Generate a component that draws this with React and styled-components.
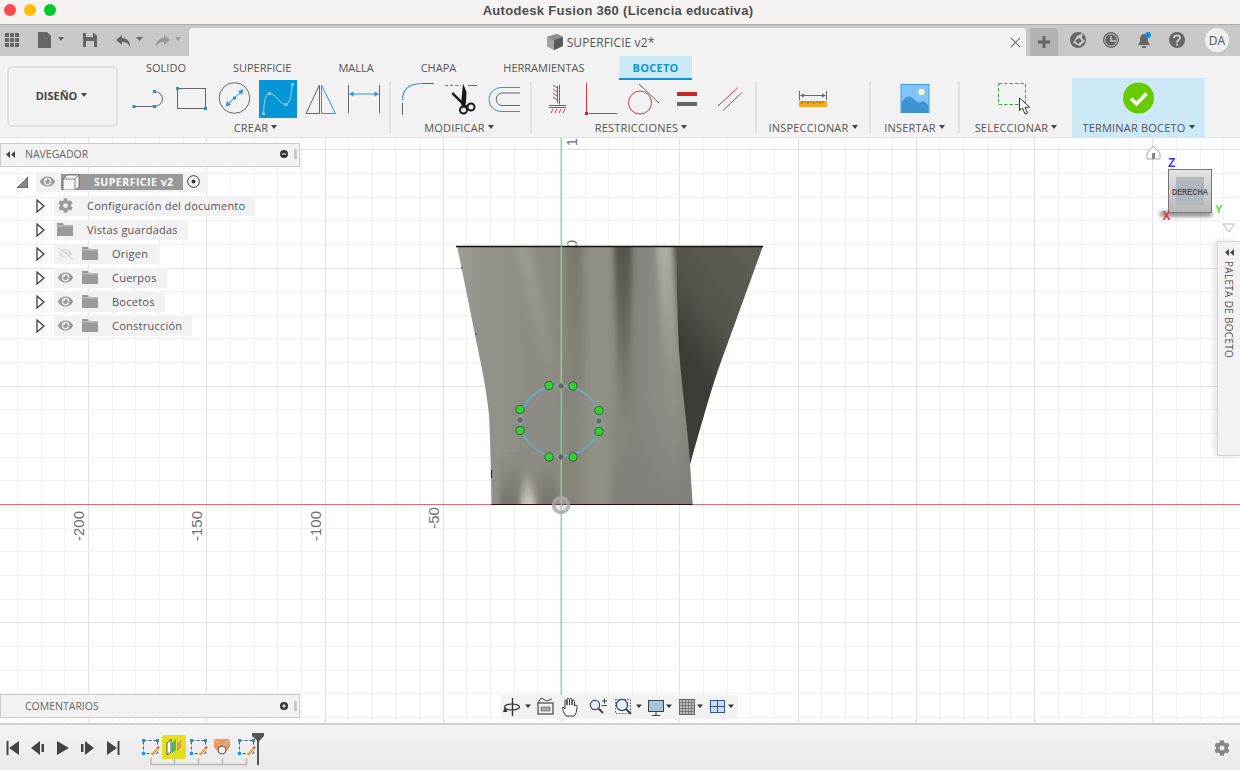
import styled, { createGlobalStyle } from "styled-components"
import { FaCog, FaEye, FaEyeSlash } from "react-icons/fa"

const GlobalStyle = createGlobalStyle`
    html, body {
        margin: 0;
        padding: 0;
        background: #fff;
    }
    * {
        box-sizing: border-box;
    }
`

// Shell
const Window = styled.div`
    width: 1240px;
    height: 770px;
    display: flex;
    flex-direction: column;
    overflow: hidden;
    font-family: "Open Sans", "Liberation Sans", sans-serif;
    color: #555;
`

const TitleBar = styled.div`
    height: 25px;
    flex: none;
    position: relative;
    display: flex;
    align-items: center;
    justify-content: center;
    background: #f6f3f2;
    border-bottom: 1px solid #adadad;
`

const TrafficLights = styled.div`
    position: absolute;
    left: 4px;
    top: 4px;
    display: flex;
    gap: 8px;
`

const Light = styled.span`
    width: 12px;
    height: 12px;
    border-radius: 50%;
    background: ${({ $color }) => $color};
`

const Title = styled.div`
    font-family: "Liberation Sans", sans-serif;
    font-size: 13px;
    font-weight: 700;
    letter-spacing: 0.3px;
    color: #4d4d4d;
    margin: -3px 4px 0 0;
`

const TabStrip = styled.div`
    height: 31px;
    flex: none;
    display: flex;
    align-items: flex-end;
    background: #c8c8c8;
`

const QuickTools = styled.div`
    width: 189px;
    height: 31px;
    flex: none;
`

const DocTab = styled.div`
    width: 837px;
    height: 28px;
    flex: none;
    position: relative;
    display: flex;
    align-items: center;
    justify-content: center;
    gap: 4px;
    padding-right: 14px;
    background: #f2f2f2;
    border-radius: 4px 4px 0 0;
    font-size: 12px;
    letter-spacing: 0.1px;
    color: #555;
`

const CloseTab = styled.span`
    position: absolute;
    right: 4px;
    top: 7px;
    display: flex;
`

const PlusTab = styled.div`
    width: 28px;
    height: 28px;
    flex: none;
    margin-left: 4px;
    display: flex;
    align-items: center;
    justify-content: center;
    background: #b3b3b3;
    border-radius: 3px 3px 0 0;
`

const StatusIcons = styled.div`
    flex: 1;
    height: 31px;
`

const Avatar = styled.div`
    position: absolute;
    right: 11px;
    top: 28px;
    width: 24px;
    height: 24px;
    border-radius: 50%;
    background: #efefef;
    display: flex;
    align-items: center;
    justify-content: center;
    font-size: 12px;
    color: #555;
`

// Ribbon
const Ribbon = styled.div`
    height: 82px;
    flex: none;
    display: flex;
    background: #f2f2f2;
    border-bottom: 1px solid #e2e2e2;
`

const DesignColumn = styled.div`
    width: 130px;
    flex: none;
    padding: 10px 12px 10px 7px;
`

const DesignButton = styled.div`
    height: 61px;
    display: flex;
    align-items: center;
    justify-content: center;
    gap: 4px;
    padding: 0 2px 2px 0;
    border: 2px solid #e0e0e0;
    border-radius: 5px;
    font-size: 11px;
    font-weight: 700;
    color: #444;
`

const RibbonBody = styled.div`
    flex: 1;
    display: flex;
    flex-direction: column;
`

const TabsRow = styled.div`
    height: 22px;
    flex: none;
    display: flex;
    gap: 21px;
    padding-left: 3px;
`

const RibbonTab = styled.div`
    height: 24px;
    padding: 0 13px;
    margin-left: ${({ $active }) => ($active ? 1 : 0)}px;
    display: flex;
    align-items: center;
    font-size: 11px;
    font-weight: ${({ $active }) => ($active ? 700 : 400)};
    letter-spacing: ${({ $active }) => ($active ? 0.3 : 0)}px;
    color: ${({ $active }) => ($active ? "#0696d7" : "#555")};
    background: ${({ $active }) => ($active ? "#cde9f5" : "transparent")};
    border-bottom: 2px solid ${({ $active }) => ($active ? "#0696d7" : "transparent")};
`

const GroupsRow = styled.div`
    height: 59px;
    flex: none;
    display: flex;
`

const Group = styled.div`
    width: ${({ $width }) => $width}px;
    flex: none;
    display: flex;
    flex-direction: column;
    align-items: ${({ $center }) => ($center ? "center" : "stretch")};
    padding: 2px ${({ $right }) => $right || 0}px 0 ${({ $left }) => $left || 0}px;
    background: ${({ $finish }) => ($finish ? "#cde9f5" : "transparent")};
`

const IconRow = styled.div`
    height: 38px;
    flex: none;
    display: flex;
    gap: 5px;
`

const IconSlot = styled.div`
    width: 38px;
    height: 38px;
    flex: none;
    background: ${({ $active }) => ($active ? "#0696d7" : "transparent")};
    svg {
        display: block;
        overflow: visible;
    }
`

const GroupLabel = styled.div`
    height: 20px;
    display: flex;
    align-items: center;
    justify-content: center;
    gap: 3px;
    font-size: 11px;
    letter-spacing: 0.2px;
    white-space: nowrap;
    color: #555;
`

const Caret = styled.span`
    width: 0;
    height: 0;
    border-left: 3px solid transparent;
    border-right: 3px solid transparent;
    border-top: 4px solid #444;
    margin-top: -1px;
`

const Separator = styled.div`
    width: 2px;
    flex: none;
    margin: 4px 0;
    background: #e0e0e0;
`

// Viewport
const Canvas = styled.div`
    flex: 1;
    position: relative;
    overflow: hidden;
    background: #fff;
`

const Scene = styled.svg`
    position: absolute;
    inset: 0;
    display: block;
`

const AxisLabel = styled.span`
    position: absolute;
    left: ${({ $x }) => $x}px;
    top: ${({ $y }) => $y}px;
    transform: translate(-50%, -50%) rotate(-90deg);
    font-family: "Liberation Sans", sans-serif;
    font-size: 15px;
    color: #6e6e6e;
`

const SidePanel = styled.div`
    position: absolute;
    left: 0;
    top: ${({ $top }) => $top}px;
    width: 300px;
`

const PanelHeader = styled.div`
    height: 24px;
    display: flex;
    align-items: center;
    padding: 0 2px ${({ $low }) => ($low ? 0 : 2)}px 5px;
    background: #f2f2f2;
    border: 1px solid #ccc;
    font-size: 10.5px;
    color: #666;
`

const HeaderLabel = styled.span`
    flex: 1;
    margin-left: ${({ $left }) => $left}px;
`

const Tree = styled.div`
    margin-top: 3px;
`

const TreeRow = styled.div`
    height: 24px;
    display: flex;
    align-items: center;
    padding-left: ${({ $root }) => ($root ? 17 : 36)}px;
`

const RowPill = styled.div`
    height: 20px;
    margin-left: ${({ $root }) => ($root ? 8 : 9)}px;
    display: flex;
    align-items: center;
    padding: 0 ${({ $root }) => ($root ? 8 : 10)}px 1px 3px;
    background: #f2f2f2;
    font-size: 11px;
    letter-spacing: 0.24px;
    color: #555;
`

const RowIcon = styled.span`
    width: 16px;
    height: 16px;
    flex: none;
    margin-right: ${({ $gap }) => $gap}px;
    display: flex;
    align-items: center;
    justify-content: center;
    color: ${({ $faint }) => ($faint ? "#dcdcdc" : "#9a9a9a")};
`

const RootBadge = styled.div`
    width: 122px;
    height: 16px;
    flex: none;
    margin: 1px 4px 0 6px;
    display: flex;
    align-items: center;
    padding-bottom: 1px;
    background: #999;
    color: #fff;
    font-size: 10.5px;
    font-weight: 700;
    letter-spacing: 0.5px;
`

const RootName = styled.span`
    margin-left: 14px;
`

const ViewCube = styled.svg`
    position: absolute;
    right: 0;
    top: 0;
    display: block;
`

const Palette = styled.div`
    position: absolute;
    right: 0;
    top: 103px;
    width: 23px;
    height: 215px;
    padding-top: 7px;
    display: flex;
    flex-direction: column;
    align-items: center;
    gap: 5px;
    background: #f2f2f2;
    border: 1px solid #d5d5d5;
    border-right: none;
    box-shadow: -3px 0 6px rgba(0, 0, 0, 0.1);
    font-size: 10px;
    letter-spacing: 0.3px;
    color: #555;
`

const PaletteLabel = styled.span`
    writing-mode: vertical-rl;
    white-space: nowrap;
`

const NavBar = styled.div`
    position: absolute;
    left: 501px;
    bottom: 4px;
    width: 237px;
    height: 24px;
    background: #f2f2f2;
`

// Timeline
const Timeline = styled.div`
    height: 47px;
    flex: none;
    position: relative;
    display: flex;
    align-items: center;
    justify-content: space-between;
    padding: 0 10px 0 0;
    background: linear-gradient(#f4f4f4, #e8e8e8);
    border-top: 2px solid #cfcfcf;
`

const SettingsGear = styled.span`
    display: flex;
    color: #888;
`

// Drawings, in page coordinates
function Glyph({ x, y = 80, size = 38, children }) {
    return (
        <svg width={size} height={size} viewBox={`${x} ${y} ${size} ${size}`}>
            {children}
        </svg>
    )
}

function Handle({ x, y, fill = "#1e90e0", size = 3 }) {
    return <rect x={x - size / 2} y={y - size / 2} width={size} height={size} fill={fill} />
}

const INK = "#666"
const BLUE = "#2b96e0"
const RED = "#d03a3a"

const createIcons = [
    {
        x: 130,
        art: (
            <>
                <path d="M134 106.5H154.5M154.5 91.5A8 7.5 0 0 1 154.5 106.5" fill="none" stroke={INK} />
                <Handle x={134} y={106.5} />
                <Handle x={154.5} y={91.5} />
                <Handle x={154.5} y={106.5} />
            </>
        ),
    },
    {
        x: 173,
        art: (
            <>
                <rect x="177.5" y="88.5" width="28" height="20" fill="none" stroke={INK} />
                <Handle x={177.5} y={88.5} />
                <Handle x={205.5} y={108.5} />
            </>
        ),
    },
    {
        x: 216,
        art: (
            <>
                <circle cx="234.5" cy="98" r="15.3" fill="none" stroke={INK} />
                <path d="M226 106L243 90" stroke={BLUE} />
                <path d="M243.5 89.5L238 91L242 95ZM225.5 106.5L231 105L227 101Z" fill={BLUE} />
                <Handle x={234.5} y={98} />
            </>
        ),
    },
    {
        x: 259,
        active: true,
        art: (
            <>
                <path d="M263.5 113.5C264 100 266 93 270 93.5C276 94 280 105 286 104.5C290 104 291 95 292.5 84.5" fill="none" stroke="#9fd6f2" />
                <Handle x={263.5} y={113.5} fill="#7cc6ee" />
                <Handle x={269.5} y={93.5} fill="#7cc6ee" />
                <Handle x={286} y={104.5} fill="#7cc6ee" />
                <Handle x={292.5} y={84.5} fill="#7cc6ee" />
            </>
        ),
    },
    {
        x: 302,
        art: (
            <>
                <path d="M306 113.5L319.5 85V113.5Z" fill="none" stroke={INK} />
                <path d="M321.5 113.5V85L335.5 113.5Z" fill="none" stroke={BLUE} />
            </>
        ),
    },
    {
        x: 345,
        art: (
            <>
                <path d="M348.5 85V113M379.5 85V113" stroke={INK} />
                <path d="M350 94H378" stroke={BLUE} />
                <path d="M349 94L353.5 91.5V96.5ZM379 94L374.5 91.5V96.5Z" fill={BLUE} />
            </>
        ),
    },
]

const modifyIcons = [
    {
        x: 399,
        art: (
            <>
                <path d="M402.5 100C402.5 90 409 84 421 83.5" fill="none" stroke={BLUE} strokeWidth="1.2" />
                <path d="M422 83.5H434M402.5 103V115" stroke={INK} />
            </>
        ),
    },
    {
        x: 442,
        art: (
            <>
                <path d="M445 85.5H461" stroke={BLUE} strokeDasharray="3 2" />
                <path d="M468 85.5H477" stroke={INK} />
                <path d="M453 92L465 104L468 106.5L465.5 108L451.5 94Z" fill="#1a1a1a" />
                <path d="M463 83.5L466.5 92L466 103L463 108L461 104Z" fill="#1a1a1a" />
                <circle cx="463.5" cy="110" r="3.5" fill="none" stroke="#1a1a1a" strokeWidth="2" />
                <circle cx="471" cy="107" r="3.5" fill="none" stroke="#1a1a1a" strokeWidth="2" />
            </>
        ),
    },
    {
        x: 485,
        art: (
            <>
                <path d="M520 87.5H501A12 12 0 0 0 501 111.5H520" fill="none" stroke={BLUE} />
                <path d="M520 93H501A6.5 6.5 0 0 0 501 105.5H520" fill="none" stroke={INK} />
            </>
        ),
    },
]

const constraintIcons = [
    {
        x: 538,
        art: (
            <>
                <path d="M559.5 85V104.5M549 105.5H566M549 107.5H566" stroke={INK} />
                <path d="M557.5 86V103M557 88L553 85M557 92L553 89M557 96L553 93M557 100L553 97M551 113L553 109M555 113L557 109M559 113L561 109M563 113L565 109" stroke={RED} fill="none" />
            </>
        ),
    },
    {
        x: 581,
        art: (
            <>
                <path d="M586.5 83V112" stroke={RED} />
                <rect x="585" y="112" width="3" height="3" fill="#c22" />
                <path d="M589 113.5H617" stroke={INK} />
            </>
        ),
    },
    {
        x: 624,
        art: (
            <>
                <circle cx="640" cy="102.5" r="11.5" fill="none" stroke={RED} />
                <path d="M639 84L659 103" stroke={INK} />
            </>
        ),
    },
    {
        x: 667,
        art: (
            <>
                <rect x="677" y="92" width="20" height="4" fill="#c62828" />
                <rect x="677" y="102" width="20" height="4" fill="#666" />
            </>
        ),
    },
    {
        x: 710,
        art: <path d="M718 106L738 87.5" stroke={RED} />,
        extra: <path d="M723 110.5L742 92.5" stroke={INK} />,
    },
]

function Ruler() {
    return (
        <Glyph x={795}>
            <path d="M800.5 91V100M827.5 91V100" stroke={INK} />
            <path d="M802 95.5H826" stroke={INK} />
            <path d="M801 95.5L805 93.5V97.5ZM827 95.5L823 93.5V97.5Z" fill={INK} />
            <rect x="800" y="101" width="28" height="6" fill="#f5a81c" />
            <path d="M803 101v3M806 101v2M809 101v3M812 101v2M815 101v3M818 101v2M821 101v3M824 101v2" stroke="#8a6414" />
        </Glyph>
    )
}

function PictureIcon() {
    return (
        <Glyph x={895.5}>
            <rect x="900.5" y="84.5" width="28" height="28" fill="#7fc4fb" stroke="#4a9ad8" />
            <path d="M901 113V103C905 95 910 95 914 100C917 103 920 103 923 101C925 102 927 104 928 106V113Z" fill="#3f93d0" />
            <circle cx="921" cy="92" r="3.2" fill="#fff4c4" />
        </Glyph>
    )
}

function SelectIcon() {
    return (
        <Glyph x={997}>
            <rect x="998.5" y="83.5" width="27" height="21" fill="none" stroke="#2ab34a" strokeDasharray="3.5 2" />
            <path d="M1019.5 98V110.5L1022.5 108L1025 114L1027.5 113L1025 107.5L1029.5 107Z" fill="#fff" stroke="#333" />
        </Glyph>
    )
}

function FinishIcon() {
    return (
        <Glyph x={1119.5}>
            <circle cx="1138" cy="98" r="15.5" fill="#66cc00" />
            <path d="M1130.5 98.5L1136 104L1146 93.5" fill="none" stroke="#fff" strokeWidth="3.6" />
        </Glyph>
    )
}

function CubeIcon() {
    return (
        <svg width="16" height="16" viewBox="0 0 16 16">
            <path d="M0 3L10 0L16 3V12L7 16L0 12Z" fill="#777" />
            <path d="M0 3L7 6V16L0 12Z" fill="#a3a3a3" />
            <path d="M7 6L16 3V12L7 16Z" fill="#5b5b5b" />
            <path d="M0 3L10 0L16 3L7 6Z" fill="#8d8d8d" />
        </svg>
    )
}

function StripArt() {
    return (
        <svg width="189" height="31" viewBox="0 25 189 31">
            {[33, 38, 43].map((y) =>
                [5, 10, 15].map((x) => <rect key={`${x}-${y}`} x={x} y={y} width="4" height="4" fill="#666" />)
            )}
            <path d="M38 32H47L51 36V48H38Z" fill="#666" />
            <path d="M58 37H64L61 41Z" fill="#666" />
            <path d="M83 33H94L97 36V47H83Z" fill="#666" />
            <rect x="86" y="33" width="7" height="4" fill="#c8c8c8" />
            <rect x="86" y="41" width="8" height="6" fill="#c8c8c8" />
            <path d="M116 40L122 35V38C127 38 130 41 130 47C128 43 126 42 122 42V45Z" fill="#666" />
            <path d="M136 37H143L139.5 41Z" fill="#666" />
            <path d="M170 40L164 35V38C159 38 156 41 156 47C158 43 160 42 164 42V45Z" fill="#999" />
            <path d="M175 37H181L178 41Z" fill="#999" />
        </svg>
    )
}

function StatusArt() {
    return (
        <svg width="182" height="31" viewBox="1058 25 182 31">
            <circle cx="1078" cy="40" r="8" fill="#666" />
            <path d="M1077 36L1083 33L1082 38L1085 41L1080 46L1073 43Z" fill="#c8c8c8" />
            <path d="M1079 38L1082 41L1078 44L1075 41Z" fill="#666" />
            <circle cx="1111" cy="40" r="7.5" fill="#666" stroke="#666" />
            <circle cx="1111" cy="40" r="6.2" fill="none" stroke="#c8c8c8" />
            <path d="M1111 36V41H1116" fill="none" stroke="#c8c8c8" strokeWidth="1.4" />
            <path d="M1138 45C1140 43 1140 41 1140 39C1140 36 1142 34 1144 34C1146 34 1148 36 1148 39C1148 41 1148 43 1150 45Z" fill="#666" />
            <rect x="1142" y="46" width="4" height="2" fill="#666" />
            <circle cx="1148" cy="35" r="3" fill="#0696d7" />
            <circle cx="1177" cy="40" r="8" fill="#666" />
            <path d="M1174 38C1174 34.8 1180 34.8 1180 38C1180 40 1177 40 1177 42.5" fill="none" stroke="#c8c8c8" strokeWidth="2" />
            <rect x="1176" y="43.5" width="2" height="2" fill="#c8c8c8" />
        </svg>
    )
}

function Chevron() {
    return (
        <svg width="9" height="14" viewBox="0 0 9 14">
            <path d="M1 1L8 7L1 13Z" fill="#fff" stroke="#333" strokeWidth="1.2" />
        </svg>
    )
}

function FolderIcon() {
    return (
        <svg width="16" height="13" viewBox="0 0 16 13">
            <path d="M0 0H6L7 2H16V13H0Z" fill="#9a9a9a" />
            <rect x="0" y="2.5" width="16" height="0.8" fill="#d5d5d5" />
        </svg>
    )
}

function Rewind({ size = 9 }) {
    return (
        <svg width={size} height="7" viewBox="0 0 9 7">
            <path d="M4 0V7L0 3.5ZM9 0V7L5 3.5Z" fill="#444" />
        </svg>
    )
}

function PanelButton({ plus }) {
    return (
        <svg width="17" height="12" viewBox="0 0 17 12">
            <circle cx="4" cy="6" r="4" fill="#333" />
            <path d="M1.8 6H6.2" stroke="#fff" />
            {plus && <path d="M4 3.8V8.2" stroke="#fff" />}
            <path d="M15 1V11" stroke="#999" />
            <path d="M16.5 1V11" stroke="#ccc" />
        </svg>
    )
}

const gridOffsets = Array.from({ length: 60 }, (_, i) => i - 30)
const STEP = 23.65

function Grid() {
    return (
        <g shapeRendering="crispEdges">
            {gridOffsets.map((k) => (
                <path
                    key={`v${k}`}
                    d={`M${Math.round(561 + k * STEP) + 0.5} 138V723`}
                    stroke={k % 5 === 0 ? "#e2e2e2" : "#f1f1f1"}
                />
            ))}
            {gridOffsets.map((k) => (
                <path
                    key={`h${k}`}
                    d={`M0 ${Math.round(504 + k * STEP) + 0.5}H1240`}
                    stroke={k % 5 === 0 ? "#e2e2e2" : "#f1f1f1"}
                />
            ))}
        </g>
    )
}

const greenPoints = [
    [549, 385.5],
    [573, 386],
    [520, 409.5],
    [599, 410.5],
    [520, 430.5],
    [599, 431.5],
    [549, 457],
    [573, 457],
]

const greyPoints = [
    [561, 386],
    [520, 420],
    [599, 421],
    [561, 457],
]

function FadeDown({ id, color, from = 1, to = 0 }) {
    return (
        <linearGradient id={id} x1="0" y1="0" x2="0" y2="1">
            <stop offset="0" stopColor={color} stopOpacity={from} />
            <stop offset="1" stopColor={color} stopOpacity={to} />
        </linearGradient>
    )
}

function Surface() {
    const outline =
        "M457 246H676C677 280 677 310 679 350C682 390 688 430 690 465L692.5 504H491.5C491 470 490.5 445 489 415C486 385 480 360 475 335C469 305 463 275 457 246Z"
    return (
        <g>
            <defs>
                <linearGradient id="skin" gradientUnits="userSpaceOnUse" x1="456" y1="0" x2="692" y2="0">
                    <stop offset="0" stopColor="#a09f96" />
                    <stop offset="0.1" stopColor="#94938a" />
                    <stop offset="0.2" stopColor="#919188" />
                    <stop offset="0.3" stopColor="#8c8c84" />
                    <stop offset="0.4" stopColor="#8c8a7e" />
                    <stop offset="0.5" stopColor="#87857a" />
                    <stop offset="0.6" stopColor="#949388" />
                    <stop offset="0.68" stopColor="#8b8a7e" />
                    <stop offset="0.76" stopColor="#83847d" />
                    <stop offset="0.86" stopColor="#8b8c85" />
                    <stop offset="0.93" stopColor="#909088" />
                    <stop offset="1" stopColor="#83837a" />
                </linearGradient>
                <linearGradient id="wedge" gradientUnits="userSpaceOnUse" x1="770" y1="260" x2="672" y2="330">
                    <stop offset="0" stopColor="#605f55" />
                    <stop offset="0.65" stopColor="#55544c" />
                    <stop offset="1" stopColor="#3d3d38" />
                </linearGradient>
                <FadeDown id="darkBand" color="#4f4f48" from={0.95} to={0} />
                <FadeDown id="midBand" color="#6f6d62" from={0.6} to={0} />
                <FadeDown id="ridge" color="#b0b0a5" from={0.95} to={0.1} />
                <FadeDown id="streak" color="#aeafa7" from={0.5} to={0} />
                <FadeDown id="edgeDark" color="#55554d" from={1} to={0.2} />
                <FadeDown id="lowRight" color="#7d807a" from={0} to={0.95} />
                <FadeDown id="lowLeft" color="#6e6c63" from={0} to={0.85} />
                <FadeDown id="glow" color="#d6d4cb" from={0} to={1} />
                <filter id="soft" x="-40%" y="-20%" width="180%" height="140%">
                    <feGaussianBlur stdDeviation="2.5" />
                </filter>
                <filter id="softer" x="-60%" y="-20%" width="220%" height="140%">
                    <feGaussianBlur stdDeviation="4" />
                </filter>
                <clipPath id="body">
                    <path d={outline} />
                </clipPath>
            </defs>
            <path
                d="M670 246H763L718 370C708 400 697 440 690 465L676 400Z"
                fill="url(#wedge)"
            />
            <path d={outline} fill="url(#skin)" />
            <g clipPath="url(#body)">
                <path d="M514 240L528 240L566 400L550 400Z" fill="url(#streak)" filter="url(#softer)" />
                <g filter="url(#soft)">
                    <path d="M566 240H582L586 420H570Z" fill="url(#midBand)" />
                    <path d="M614 240H632L630 430H618Z" fill="url(#darkBand)" />
                    <path d="M656 240H672L678 370H664Z" fill="url(#ridge)" />
                    <path d="M672 240H690L690 350L678 350Z" fill="url(#edgeDark)" />
                    <path d="M612 400H700V510H612Z" fill="url(#lowRight)" />
                    <path d="M500 455L522 455L518 510H500Z" fill="url(#lowLeft)" />
                    <path d="M536 465L552 465L560 510H540Z" fill="url(#lowLeft)" />
                </g>
                <path d="M524 472L530 472L536 510H521Z" fill="url(#glow)" filter="url(#soft)" />
            </g>
            <path d="M456 246.5H763" stroke="#111" strokeWidth="1.3" />
            <path d="M491.5 504.5H692.5" stroke="#2a0b0b" strokeWidth="1.2" />
            <path d="M491.5 470V478M475 334H476.5M461 268H462.5" stroke="#222" />
        </g>
    )
}

function Sketch() {
    return (
        <g>
            <ellipse cx="560" cy="421" rx="39.5" ry="35.5" fill="#7f9498" fillOpacity="0.15" stroke="#72a3b5" strokeWidth="2.4" />
            {greyPoints.map(([x, y]) => (
                <circle key={`${x}-${y}`} cx={x} cy={y} r="3.2" fill="#5f6a66" stroke="#a8a8a0" strokeWidth="0.8" />
            ))}
            {greenPoints.map(([x, y]) => (
                <circle key={`${x}-${y}`} cx={x} cy={y} r="4.1" fill="#2fd42f" stroke="#3c5c3c" />
            ))}
        </g>
    )
}

function NavBarArt() {
    return (
        <svg width="237" height="24" viewBox="501 695 237 24">
            <path d="M512.5 698V716" stroke="#333" strokeWidth="1.4" />
            <ellipse cx="512" cy="707" rx="7.5" ry="3" fill="none" stroke="#333" strokeWidth="1.2" />
            <path d="M505 707L507.5 712H503Z" fill="#333" />
            <path d="M525 704.5H531L528 708Z" fill="#333" />
            <rect x="538" y="703" width="15" height="11" fill="none" stroke="#444" strokeWidth="1.2" />
            <rect x="541" y="707" width="9" height="4" fill="#aaa" stroke="#555" strokeWidth="0.6" />
            <path d="M538 703L541 698L547 701L552 699" fill="none" stroke="#444" />
            <path d="M566 716C563 712 562 708 563 707L565 709V701C565 699.5 567 699.5 567 701V705V699.5C567 698 569 698 569.5 699.5V705V699.5C570 698 572 698 572 700V705V701C572.5 699.5 574.5 700 574.5 701.5V706C575.5 705 577 705 577 706.5C577 710 575.5 716 574 716Z" fill="#fff" stroke="#333" />
            <circle cx="595" cy="705" r="4.6" fill="#e3eef5" stroke="#445" strokeWidth="1.2" />
            <path d="M598.5 708.5L603 713" stroke="#444" strokeWidth="2" />
            <path d="M602 701H607M604.5 698.5V703.5M602 705.5H607" stroke="#444" />
            <rect x="615.5" y="699.5" width="15" height="14" fill="none" stroke="#666" strokeDasharray="1.5 1.5" />
            <circle cx="622" cy="705" r="5.6" fill="#e3eef5" stroke="#445" strokeWidth="1.2" />
            <path d="M626 709L631 714" stroke="#444" strokeWidth="2" />
            <path d="M636 704.5H642L639 708Z" fill="#333" />
            <rect x="648.5" y="700.5" width="15" height="11" fill="#a9c2dc" stroke="#444" />
            <path d="M656 712V715M652 715.5H660" stroke="#444" />
            <path d="M666 704.5H672L669 708Z" fill="#333" />
            <rect x="679.5" y="699.5" width="15" height="15" fill="#bbb" stroke="#666" />
            <path d="M682.5 700V714M685.5 700V714M688.5 700V714M691.5 700V714M680 702.5H694M680 705.5H694M680 708.5H694M680 711.5H694" stroke="#666" strokeWidth="0.7" />
            <path d="M697 704.5H703L700 708Z" fill="#333" />
            <rect x="710.5" y="700.5" width="14" height="12" fill="#cddcf0" stroke="#33558a" />
            <path d="M717.5 701V712M711 706.5H724" stroke="#33558a" />
            <path d="M728 704.5H734L731 708Z" fill="#333" />
        </svg>
    )
}

function sketchChip(x) {
    return (
        <g key={x}>
            <rect x={x + 0.5} y="740.5" width="14" height="13" fill="none" stroke="#555" strokeDasharray="3 2" />
            <Handle x={x + 0.5} y={740.5} />
            <Handle x={x + 14.5} y={740.5} />
            <Handle x={x + 0.5} y={753.5} />
            <path d={`M${x + 9} ${755}L${x + 15} ${748}`} stroke="#e8a13a" strokeWidth="2" />
            <circle cx={x + 15.5} cy="747.5" r="1" fill="#e33" />
        </g>
    )
}

function TimelineArt() {
    return (
        <svg width="270" height="45" viewBox="0 725 270 45">
            <path d="M7.5 741V755" stroke="#444" strokeWidth="2" />
            <path d="M19 741V755L9 748Z" fill="#444" />
            <path d="M31 748L40 741V755Z" fill="#444" />
            <rect x="41.5" y="744" width="2.5" height="8" fill="#444" />
            <path d="M57 741L69 748L57 755Z" fill="#444" />
            <rect x="81" y="744" width="2.5" height="8" fill="#444" />
            <path d="M85 741L94 748L85 755Z" fill="#444" />
            <path d="M107 741V755L117 748Z" fill="#444" />
            <path d="M118.5 741V755" stroke="#444" strokeWidth="2" />
            {sketchChip(143)}
            <rect x="162" y="735" width="24" height="24" rx="2" fill="#e3e01f" />
            <path d="M167 755V743L171 739V752Z" fill="#fff" stroke="#555" />
            <path d="M172 753V743L176 739V750Z" fill="#4fb56b" />
            <path d="M177 751V743L181 740V748Z" fill="#e09a5c" />
            {sketchChip(191)}
            <path d="M214 739H230V747L225 753H219L214 747Z" fill="#f0965c" />
            <path d="M214 739L222 747L230 739" fill="none" stroke="#ffd9c0" />
            <circle cx="222" cy="750" r="4" fill="#eee" stroke="#555" />
            {sketchChip(239)}
            <path d="M151 758V764.5H246.5V758M174.5 758V764M198.5 758V764M222.5 758V764" fill="none" stroke="#bbb" strokeWidth="1.6" />
            <path d="M252 733H264V736L258.5 742L252 736Z" fill="#555" />
            <path d="M258 740V765" stroke="#555" strokeWidth="2" />
        </svg>
    )
}

const treeItems = [
    { label: "Configuración del documento", icon: "gear" },
    { label: "Vistas guardadas", icon: "folder" },
    { label: "Origen", eye: "off" },
    { label: "Cuerpos", eye: "on" },
    { label: "Bocetos", eye: "on" },
    { label: "Construcción", eye: "on" },
]

function renderIcons(list) {
    return list.map((icon) => (
        <IconSlot key={icon.x} $active={icon.active}>
            <Glyph x={icon.x}>
                {icon.art}
                {icon.extra}
            </Glyph>
        </IconSlot>
    ))
}

function App() {
    return (
        <Window>
            <GlobalStyle />
            <TitleBar>
                <TrafficLights>
                    <Light $color="#ff4b47" />
                    <Light $color="#ffbd00" />
                    <Light $color="#00ca2e" />
                </TrafficLights>
                <Title>Autodesk Fusion 360 (Licencia educativa)</Title>
            </TitleBar>

            <TabStrip>
                <QuickTools>
                    <StripArt />
                </QuickTools>
                <DocTab>
                    <CubeIcon />
                    SUPERFICIE v2*
                    <CloseTab>
                        <svg width="14" height="14" viewBox="0 0 14 14">
                            <path d="M3 3L12 12M12 3L3 12" stroke="#777" strokeWidth="1.2" />
                        </svg>
                    </CloseTab>
                </DocTab>
                <PlusTab>
                    <svg width="14" height="14" viewBox="0 0 14 14">
                        <path d="M7 1V13M1 7H13" stroke="#666" strokeWidth="3" />
                    </svg>
                </PlusTab>
                <StatusIcons>
                    <StatusArt />
                </StatusIcons>
                <Avatar>DA</Avatar>
            </TabStrip>

            <Ribbon>
                <DesignColumn>
                    <DesignButton>
                        DISEÑO
                        <Caret />
                    </DesignButton>
                </DesignColumn>
                <RibbonBody>
                    <TabsRow>
                        <RibbonTab>SOLIDO</RibbonTab>
                        <RibbonTab>SUPERFICIE</RibbonTab>
                        <RibbonTab>MALLA</RibbonTab>
                        <RibbonTab>CHAPA</RibbonTab>
                        <RibbonTab>HERRAMIENTAS</RibbonTab>
                        <RibbonTab $active>BOCETO</RibbonTab>
                    </TabsRow>
                    <GroupsRow>
                        <Group $width={259} $right={8}>
                            <IconRow>{renderIcons(createIcons)}</IconRow>
                            <GroupLabel>
                                CREAR
                                <Caret />
                            </GroupLabel>
                        </Group>
                        <Separator />
                        <Group $width={139} $left={8} $right={11}>
                            <IconRow>{renderIcons(modifyIcons)}</IconRow>
                            <GroupLabel>
                                MODIFICAR
                                <Caret />
                            </GroupLabel>
                        </Group>
                        <Separator />
                        <Group $width={223} $left={6} $right={11}>
                            <IconRow>{renderIcons(constraintIcons)}</IconRow>
                            <GroupLabel>
                                RESTRICCIONES
                                <Caret />
                            </GroupLabel>
                        </Group>
                        <Separator />
                        <Group $width={112} $center>
                            <IconSlot>
                                <Ruler />
                            </IconSlot>
                            <GroupLabel>
                                INSPECCIONAR
                                <Caret />
                            </GroupLabel>
                        </Group>
                        <Separator />
                        <Group $width={87} $center>
                            <IconSlot>
                                <PictureIcon />
                            </IconSlot>
                            <GroupLabel>
                                INSERTAR
                                <Caret />
                            </GroupLabel>
                        </Group>
                        <Separator />
                        <Group $width={112} $center>
                            <IconSlot>
                                <SelectIcon />
                            </IconSlot>
                            <GroupLabel>
                                SELECCIONAR
                                <Caret />
                            </GroupLabel>
                        </Group>
                        <Group $width={133} $center $finish>
                            <IconSlot>
                                <FinishIcon />
                            </IconSlot>
                            <GroupLabel>
                                TERMINAR BOCETO
                                <Caret />
                            </GroupLabel>
                        </Group>
                    </GroupsRow>
                </RibbonBody>
            </Ribbon>

            <Canvas>
                <AxisLabel $x={78} $y={388}>-200</AxisLabel>
                <AxisLabel $x={196} $y={388}>-150</AxisLabel>
                <AxisLabel $x={315} $y={388}>-100</AxisLabel>
                <AxisLabel $x={433} $y={380}>-50</AxisLabel>
                <AxisLabel $x={571} $y={106}>0</AxisLabel>
                <AxisLabel $x={571} $y={4}>1</AxisLabel>
                <Scene width="1240" height="585" viewBox="0 138 1240 585">
                    <Grid />
                    <path d="M561.3 138V695" stroke="#8fdf9a" strokeWidth="1.7" />
                    <path d="M0 504.5H1240" stroke="#e06a6a" shapeRendering="crispEdges" />
                    <Surface />
                    <path d="M561.3 246V505" stroke="#8fdf8f" strokeOpacity="0.8" strokeWidth="1.5" />
                    <Sketch />
                    <circle cx="561" cy="505" r="7.5" fill="#bbb" fillOpacity="0.35" stroke="#a8a8a8" strokeOpacity="0.8" strokeWidth="3.5" />
                </Scene>

                <SidePanel $top={5}>
                    <PanelHeader>
                        <Rewind />
                        <HeaderLabel $left={10}>NAVEGADOR</HeaderLabel>
                        <PanelButton />
                    </PanelHeader>
                    <Tree>
                        <TreeRow $root>
                            <svg width="11" height="11" viewBox="0 0 11 11">
                                <path d="M0 11L11 0V11Z" fill="#888" stroke="#333" strokeWidth="0.6" />
                            </svg>
                            <RowPill $root>
                                <RowIcon><FaEye size={15} /></RowIcon>
                                <RootBadge>
                                    <svg width="19" height="16" viewBox="0 0 19 16">
                                        <path d="M2 5L6 1H18V13L14 16H2Z" fill="#f5f5f5" stroke="#555" strokeWidth="0.7" />
                                        <path d="M2 5H14V16M14 5L18 1" fill="none" stroke="#555" strokeWidth="0.7" />
                                    </svg>
                                    <RootName>SUPERFICIE v2</RootName>
                                </RootBadge>
                                <svg width="13" height="13" viewBox="0 0 13 13">
                                    <circle cx="6.5" cy="6.5" r="5.8" fill="#fff" stroke="#333" />
                                    <circle cx="6.5" cy="6.5" r="2" fill="#333" />
                                </svg>
                            </RowPill>
                        </TreeRow>
                        {treeItems.map((item) => (
                            <TreeRow key={item.label}>
                                <Chevron />
                                <RowPill>
                                    {item.eye === "on" && <RowIcon $gap={9}><FaEye size={15} /></RowIcon>}
                                    {item.eye === "off" && <RowIcon $gap={9} $faint><FaEyeSlash size={15} /></RowIcon>}
                                    {item.eye && <RowIcon $gap={14}><FolderIcon /></RowIcon>}
                                    {item.icon === "gear" && <RowIcon $gap={14}><FaCog size={15} /></RowIcon>}
                                    {item.icon === "folder" && <RowIcon $gap={14}><FolderIcon /></RowIcon>}
                                    {item.label}
                                </RowPill>
                            </TreeRow>
                        ))}
                    </Tree>
                </SidePanel>

                <SidePanel $top={556}>
                    <PanelHeader $low>
                        <HeaderLabel $left={19}>COMENTARIOS</HeaderLabel>
                        <PanelButton plus />
                    </PanelHeader>
                </SidePanel>

                <ViewCube width="120" height="110" viewBox="1120 138 120 110">
                    <defs>
                        <linearGradient id="cubeFace" x1="0" y1="0" x2="0" y2="1">
                            <stop offset="0" stopColor="#e4e4e4" />
                            <stop offset="1" stopColor="#b8b8b8" />
                        </linearGradient>
                        <filter id="cubeShadow" x="-30%" y="-100%" width="160%" height="300%">
                            <feGaussianBlur stdDeviation="2" />
                        </filter>
                    </defs>
                    <path d="M1147 153L1153.5 146L1160 153V159H1147Z" fill="#fff" stroke="#aaa" />
                    <rect x="1152" y="153" width="3" height="6" fill="#888" />
                    <rect x="1160" y="212" width="52" height="4" fill="#444" opacity="0.8" filter="url(#cubeShadow)" />
                    <rect x="1168.5" y="169.5" width="43" height="43" fill="url(#cubeFace)" stroke="#777" />
                    <rect x="1176" y="177" width="28" height="28" fill="#b1b6bf" />
                    <text x="1190" y="195" textAnchor="middle" fontSize="9.5" fontWeight="700" fontFamily="Liberation Sans, sans-serif" fill="#505050" textLength="36" lengthAdjust="spacingAndGlyphs">DERECHA</text>
                    <text x="1168" y="167" fontSize="12" fontWeight="700" fontFamily="Liberation Sans, sans-serif" fill="#3333ee">Z</text>
                    <text x="1215" y="213" fontSize="11" fontWeight="700" fontFamily="Liberation Sans, sans-serif" fill="#3fe04a">Y</text>
                    <text x="1162.5" y="220" fontSize="12" fontWeight="700" fontFamily="Liberation Sans, sans-serif" fill="#ee3344">X</text>
                    <path d="M1223 224H1234L1229 232Z" fill="#fff" stroke="#bbb" />
                </ViewCube>

                <Palette>
                    <Rewind />
                    <PaletteLabel>PALETA DE BOCETO</PaletteLabel>
                </Palette>

                <NavBar>
                    <NavBarArt />
                </NavBar>
            </Canvas>

            <Timeline>
                <TimelineArt />
                <SettingsGear>
                    <FaCog size={16} />
                </SettingsGear>
            </Timeline>
        </Window>
    )
}

export default App
